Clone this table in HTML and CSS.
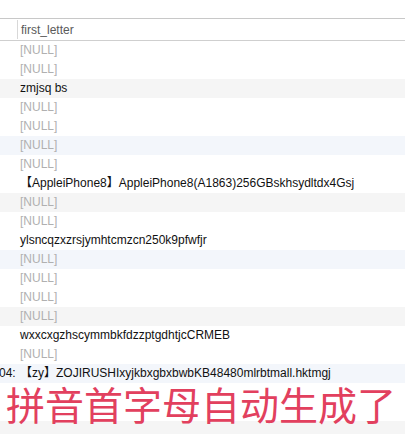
FILE: index.html
```html
<!DOCTYPE html>
<html>
<head>
<meta charset="utf-8">
<link rel="stylesheet" href="styles.css">
</head>
<body>
<div class="grid">
  <div class="header"><span class="sep"></span><span class="htext">first_letter</span></div>
  <div class="row null">[NULL]</div>
  <div class="row null">[NULL]</div>
  <div class="row gray">zmjsq bs</div>
  <div class="row null">[NULL]</div>
  <div class="row null">[NULL]</div>
  <div class="row null blue">[NULL]</div>
  <div class="row null">[NULL]</div>
  <div class="row">【AppleiPhone8】AppleiPhone8(A1863)256GBskhsydltdx4Gsj</div>
  <div class="row null gray">[NULL]</div>
  <div class="row null">[NULL]</div>
  <div class="row">ylsncqzxzrsjymhtcmzcn250k9pfwfjr</div>
  <div class="row null blue">[NULL]</div>
  <div class="row null">[NULL]</div>
  <div class="row null">[NULL]</div>
  <div class="row null gray">[NULL]</div>
  <div class="row">wxxcxgzhscymmbkfdzzptgdhtjcCRMEB</div>
  <div class="row null">[NULL]</div>
  <div class="row blue edge"><span class="num">04:</span>【zy】ZOJIRUSHIxyjkbxgbxbwbKB48480mlrbtmall.hktmgj</div>
  <div class="row"></div>
  <div class="row"></div>
  <div class="row gray"></div>
  <div class="caption">拼音首字母自动生成了</div>
</div>
</body>
</html>
```
FILE: styles.css
```css
html, body {
  margin: 0;
  padding: 0;
  background: #fff;
  overflow: hidden;
}
.grid {
  position: relative;
  padding-top: 18px;
  font-family: "Liberation Sans", Arial, "Noto Sans CJK SC", sans-serif;
  font-size: 12px;
  color: #111;
}
.header {
  height: 21px;
  border-top: 1px solid #c8c8c8;
  border-bottom: 1px solid #cfcfcf;
  display: flex;
  align-items: center;
  color: #5a5a5a;
}
.sep {
  width: 1px;
  height: 19px;
  background: #d8d8d8;
  margin-left: 17px;
}
.htext {
  margin-left: 3px;
}
.row {
  height: 19px;
  line-height: 19px;
  padding-left: 20px;
  white-space: nowrap;
}
.null {
  color: #b0b0b0;
}
.gray {
  background: #f5f5f5;
}
.blue {
  background: #f3f6fb;
}
.edge {
  padding-left: 0;
  margin-left: -1px;
}
.num {
  display: inline-block;
  width: 21px;
}
.caption {
  position: absolute;
  left: 6px;
  top: 384px;
  font-family: "Noto Sans CJK SC", sans-serif;
  font-size: 39px;
  line-height: 39px;
  letter-spacing: 0;
  color: #e2405e;
  white-space: nowrap;
}
```
